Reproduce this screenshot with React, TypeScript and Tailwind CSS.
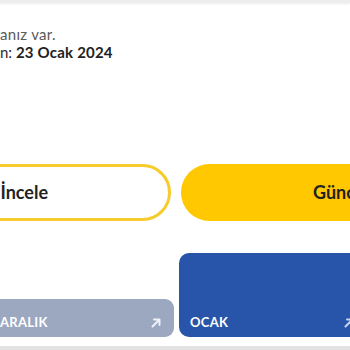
import React from "react";

function Arrow({ className }: { className?: string }) {
  return (
    <svg viewBox="0 0 12 12" className={className} fill="none" stroke="currentColor" strokeWidth={2} strokeLinecap="round" strokeLinejoin="round">
      <path d="M2.5 9.5 L9.5 2.5 M4 2.5 H9.5 V8" />
    </svg>
  );
}

export default function App() {
  return (
    <div className="w-[350px] h-[350px] overflow-hidden bg-white flex flex-col font-['Lato',sans-serif]">
      {/* header edge */}
      <div className="h-[3px] shrink-0 bg-[#ededed] shadow-[0_1px_2px_rgba(0,0,0,0.08)]" />

      {/* summary text */}
      <div className="mt-[22px] text-[15px] leading-[18px] whitespace-nowrap">
        <p className="flex -ml-[200px] text-[#5a5a5a]">
          <span className="w-[200px] shrink-0 text-right">Ödenmemiş fatur</span>
          <span className="tracking-[0.3px]">anız var.</span>
        </p>
        <p className="flex -ml-[200px] text-[#2b2b2b]">
          <span className="w-[200px] shrink-0 text-right">Son ödeme tarihi</span>
          <span>
            n: <span className="font-bold text-[#222] tracking-[0.2px]">23 Ocak 2024</span>
          </span>
        </p>
      </div>

      {/* actions */}
      <div className="mt-[103px] flex gap-[10px] -ml-[149px] shrink-0">
        <button className="w-[320px] h-[57px] shrink-0 rounded-full border-[3px] border-[#f6cb2c] bg-white flex items-center justify-end pr-[120px] text-[18px] font-bold text-[#222] whitespace-nowrap">
          Faturayı İncele
        </button>
        <button className="w-[320px] h-[57px] shrink-0 rounded-full bg-[#ffc800] flex items-center justify-start pl-[132px] text-[18px] font-bold text-[#222] whitespace-nowrap">
          Güncelle
        </button>
      </div>

      {/* months */}
      <div className="mt-[32px] flex items-end gap-[5px] -ml-[13px] shrink-0">
        <div className="w-[187px] h-[38px] shrink-0 rounded-r-[9px] bg-[#9ba8c0] flex items-end justify-between pl-[13px] pr-[12px] pb-[8px]">
          <span className="text-[13px] leading-none font-bold tracking-[0.3px] text-white">ARALIK</span>
          <Arrow className="w-[12px] h-[12px] text-[#eef1f6]" />
        </div>
        <div className="w-[188px] h-[84px] shrink-0 rounded-l-[10px] bg-[#2855a9] flex items-end justify-between pl-[11px] pr-[12px] pb-[8px]">
          <span className="text-[13px] leading-none font-bold tracking-[0.3px] text-white">OCAK</span>
          <Arrow className="w-[12px] h-[12px] text-[#c9d4ea]" />
        </div>
      </div>

      {/* next section edge */}
      <div className="mt-[9px] flex-1 bg-[#e3e3e3]" />
    </div>
  );
}
